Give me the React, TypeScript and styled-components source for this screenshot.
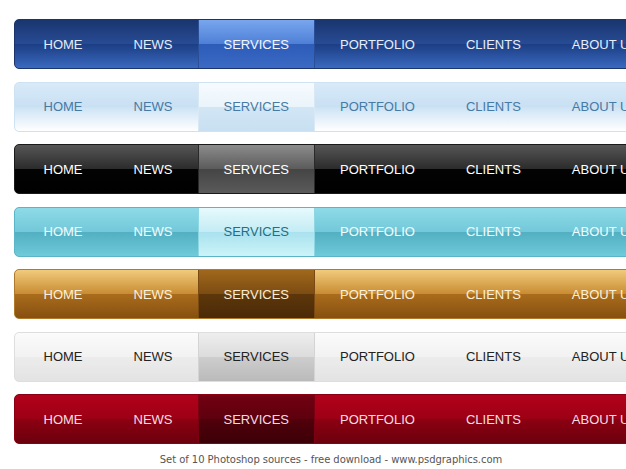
import React from "react";
import styled, { createGlobalStyle } from "styled-components";

const Global = createGlobalStyle`
  html, body { margin: 0; padding: 0; background: #ffffff; overflow: hidden; }
  body { width: 626px; height: 469px; }
`;

type Theme = {
  border: string;
  bg: string;
  text: string;
  activeBg: string;
  activeText: string;
  activeEdge: string;
};

const gloss = (a: string, b: string, c: string, d: string) =>
  `linear-gradient(to bottom, ${a} 0%, ${b} 49%, ${c} 51%, ${d} 100%)`;

const themes: Theme[] = [
  {
    border: "#1b3469",
    bg: gloss("#1a356f", "#274b93", "#1c3e85", "#3a69bf"),
    text: "#e6eefb",
    activeBg: gloss("#78a6ee", "#4f80d6", "#2c5cb8", "#3b6ac4"),
    activeText: "#f3f7ff",
    activeEdge: "#2a4f96",
  },
  {
    border: "#cfe2f1",
    bg: gloss("#d8eaf8", "#c9e0f3", "#cde3f4", "#ffffff"),
    text: "#457aa4",
    activeBg: gloss("#f6fbfe", "#eaf4fb", "#d2e6f5", "#c8e0f2"),
    activeText: "#457aa4",
    activeEdge: "#d8e9f5",
  },
  {
    border: "#1a1a1a",
    bg: gloss("#565656", "#2c2c2c", "#030303", "#000000"),
    text: "#ffffff",
    activeBg: gloss("#8c8c8c", "#5c5c5c", "#454545", "#5a5a5a"),
    activeText: "#ffffff",
    activeEdge: "#2a2a2a",
  },
  {
    border: "#5bb5c6",
    bg: gloss("#8edae8", "#72c9d9", "#52b0c2", "#6fcad9"),
    text: "#f2fcfe",
    activeBg: gloss("#e6fafd", "#c4ecf4", "#a9e2ee", "#cdf3f9"),
    activeText: "#1f6f85",
    activeEdge: "#8fd6e3",
  },
  {
    border: "#b07a2a",
    bg: gloss("#f1cb7c", "#c98d34", "#a96c1c", "#875010"),
    text: "#fdf1da",
    activeBg: gloss("#a0681c", "#7d4c12", "#5d370b", "#4b2a07"),
    activeText: "#fbedd2",
    activeEdge: "#7a4a12",
  },
  {
    border: "#dedede",
    bg: gloss("#fbfbfb", "#f2f2f2", "#ececec", "#e3e3e3"),
    text: "#222222",
    activeBg: gloss("#eeeeee", "#dcdcdc", "#cdcdcd", "#bababa"),
    activeText: "#222222",
    activeEdge: "#d4d4d4",
  },
  {
    border: "#8a0012",
    bg: gloss("#b3001a", "#9c0016", "#8c0012", "#6c000d"),
    text: "#f7dfe3",
    activeBg: gloss("#720012", "#5e000e", "#50000b", "#3c0007"),
    activeText: "#f5dde1",
    activeEdge: "#7a0012",
  },
];

const items = ["HOME", "NEWS", "SERVICES", "PORTFOLIO", "CLIENTS", "ABOUT US"];

const Page = styled.div`
  display: flex;
  flex-direction: column;
  padding: 19px 0 0 14px;
  gap: 12.5px;
  font-family: "Liberation Sans", Arial, sans-serif;
`;

const Bar = styled.nav<{ $t: Theme }>`
  display: flex;
  align-items: stretch;
  width: 680px;
  height: 50px;
  box-sizing: border-box;
  padding-left: 3px;
  border: 1px solid ${(p) => p.$t.border};
  border-radius: 5px;
  background: ${(p) => p.$t.bg};
  overflow: hidden;
`;

const Item = styled.a<{ $t: Theme; $active?: boolean }>`
  display: flex;
  align-items: center;
  padding: 0 25.5px;
  font-size: 13px;
  white-space: nowrap;
  text-decoration: none;
  color: ${(p) => (p.$active ? p.$t.activeText : p.$t.text)};
  background: ${(p) => (p.$active ? p.$t.activeBg : "transparent")};
  box-shadow: ${(p) =>
    p.$active ? `inset 1px 0 0 ${p.$t.activeEdge}, inset -1px 0 0 ${p.$t.activeEdge}` : "none"};
`;

const Caption = styled.div`
  margin-top: -3px;
  width: 634px;
  text-align: center;
  font-family: "DejaVu Sans", Verdana, sans-serif;
  font-size: 10px;
  color: #555555;
  letter-spacing: -0.05px;
`;

export default function App() {
  return (
    <>
      <Global />
      <Page>
        {themes.map((t, i) => (
          <Bar key={i} $t={t}>
            {items.map((label) => (
              <Item key={label} $t={t} $active={label === "SERVICES"}>
                {label}
              </Item>
            ))}
          </Bar>
        ))}
        <Caption>Set of 10 Photoshop sources - free download - www.psdgraphics.com</Caption>
      </Page>
    </>
  );
}
